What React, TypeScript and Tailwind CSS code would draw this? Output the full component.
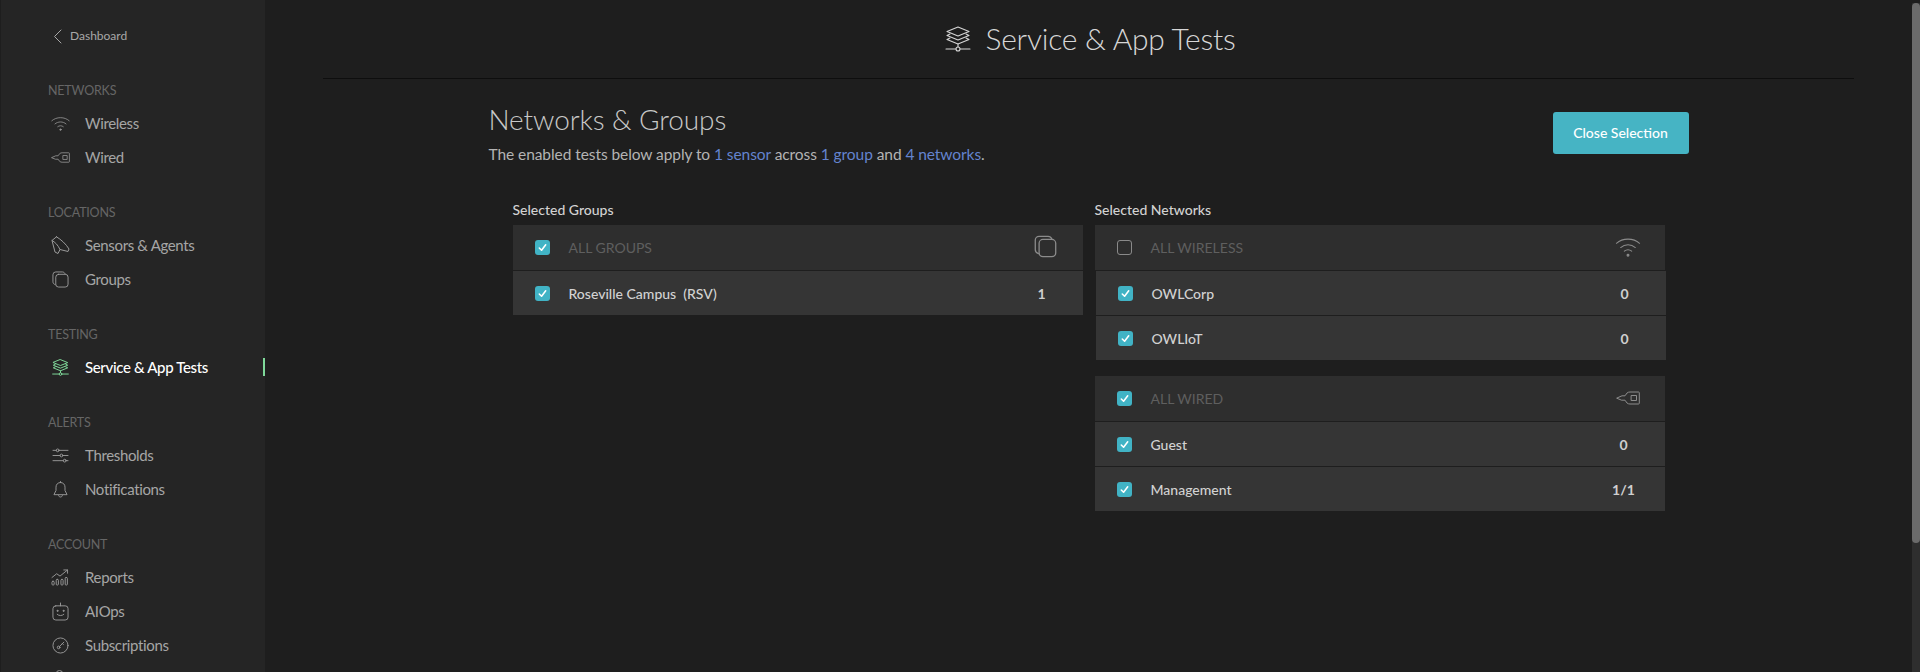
import React from "react";

type IconProps = { className?: string; sw?: number };

const Svg = ({ className, box, sw = 1, children }: IconProps & { box: string; children: React.ReactNode }) => (
  <svg viewBox={box} fill="none" stroke="currentColor" strokeWidth={sw} strokeLinecap="round" strokeLinejoin="round" className={className}>
    {children}
  </svg>
);

const WifiIcon = ({ className }: IconProps) => (
  <Svg box="0 0 24 19" className={className}>
    <path d="M1 6C7 .7 17 .7 23 6" />
    <path d="M5 10c4-3.400 10-3.400 14 0" />
    <path d="M8.500 13.500c2-1.600 5-1.600 7 0" />
    <circle cx="12" cy="17.300" r=".9" fill="currentColor" />
  </Svg>
);

const PlugIcon = ({ className }: IconProps) => (
  <Svg box="0 0 24 14" className={className}>
    <path d="M1 7l5-2.200h3L11 2c1-.8 2-1 3-1h8.500a.8.8 0 0 1 .8.800v10.400a.8.800 0 0 1-.8.800H14c-1 0-2-.2-3-1L9 9.200H6z" />
    <rect x="15.500" y="4.500" width="5" height="5" />
  </Svg>
);

const SensorIcon = ({ className }: IconProps) => (
  <Svg box="0 0 19 19" className={className}>
    <path d="M5.500.8L1 4.500 4 16l3 1.500 2-4 8 2 1-2.500C15 8 10 3.500 5.500.8z" />
    <path d="M1 4.500C4 6 7 9 9 13.500" />
  </Svg>
);

const GroupsIcon = ({ className }: IconProps) => (
  <Svg box="0 0 18 18" className={className}>
    <path d="M3.500 14.500C2 14 1 13 1 11.500V4a3 3 0 0 1 3-3h7c1.500 0 2.500 1 3 2.200" />
    <rect x="4" y="3.500" width="13" height="13.500" rx="3" />
  </Svg>
);

const StackIcon = ({ className, sw = 1 }: IconProps) => (
  <Svg box="0 0 26 26" className={className} sw={sw}>
    <path d="M13 1l11 4.500L13 10 2 5.500z" />
    <path d="M5 8L2 9.500 13 14l11-4.500L21 8" />
    <path d="M5 12l-3 1.500L13 18l11-4.500L21 12" />
    <path d="M13 18v3" />
    <circle cx="13" cy="23" r="2" />
    <path d="M1 23h10M15 23h10" />
  </Svg>
);

const SlidersIcon = ({ className }: IconProps) => (
  <Svg box="0 0 18 16" className={className}>
    <path d="M1 2.500h3.500M7.500 2.500H17M1 8h7.500M11.500 8H17M1 13.500h11M15 13.500h2" />
    <circle cx="6" cy="2.500" r="1.500" />
    <circle cx="10" cy="8" r="1.500" />
    <circle cx="13.500" cy="13.500" r="1.500" />
  </Svg>
);

const BellIcon = ({ className }: IconProps) => (
  <Svg box="0 0 16 18" className={className}>
    <path d="M8 1.500c-3 0-4.800 2.200-4.800 5v3.500L1 14.500h14L12.800 10V6.500c0-2.800-1.800-5-4.800-5z" />
    <path d="M6 15.500c.3 1 1 1.500 2 1.500s1.700-.5 2-1.500" />
    <path d="M8 .5v1" />
  </Svg>
);

const ReportsIcon = ({ className }: IconProps) => (
  <Svg box="0 0 19 18" className={className}>
    <path d="M1 9l5-4 3.500 2.500L17.500 1M13.500 1h4v3.500" />
    <rect x="1" y="13" width="2.300" height="4" rx="1" />
    <rect x="5.500" y="11" width="2.300" height="6" rx="1" />
    <rect x="10.500" y="11" width="2.300" height="6" rx="1" />
    <rect x="15" y="9" width="2.300" height="8" rx="1" />
  </Svg>
);

const BotIcon = ({ className }: IconProps) => (
  <Svg box="0 0 18 20" className={className}>
    <rect x="1" y="4" width="16" height="15" rx="3" />
    <path d="M9 1v3" />
    <circle cx="5.800" cy="9.300" r=".6" fill="currentColor" />
    <circle cx="12.200" cy="9.300" r=".6" fill="currentColor" />
    <path d="M5.500 13c1.800 1.800 5.200 1.800 7 0" />
  </Svg>
);

const KeyCircleIcon = ({ className }: IconProps) => (
  <Svg box="0 0 18 18" className={className}>
    <circle cx="9" cy="9" r="8" />
    <circle cx="7" cy="11" r="1.400" />
    <path d="M8 10l4.500-4.500M11 7l1 1" />
  </Svg>
);

const ChevronLeft = ({ className }: IconProps) => (
  <Svg box="0 0 9 15" className={className}>
    <path d="M8 1L1.500 7.500 8 14" />
  </Svg>
);

const UserIcon = ({ className }: IconProps) => (
  <Svg box="0 0 18 18" className={className}>
    <circle cx="9" cy="4" r="3.500" />
    <path d="M2 17c0-4 3-6 7-6s7 2 7 6" />
  </Svg>
);

const navGroups = [
  { title: "NETWORKS", items: [{ label: "Wireless", Icon: WifiIcon, size: "w-[19px] h-[15px]" }, { label: "Wired", Icon: PlugIcon, size: "w-[19px] h-[11px]" }] },
  { title: "LOCATIONS", items: [{ label: "Sensors & Agents", Icon: SensorIcon, size: "w-[19px] h-[19px]" }, { label: "Groups", Icon: GroupsIcon, size: "w-[17px] h-[17px]" }] },
  { title: "TESTING", items: [{ label: "Service & App Tests", Icon: StackIcon, size: "w-[17px] h-[17px]", active: true }] },
  { title: "ALERTS", items: [{ label: "Thresholds", Icon: SlidersIcon, size: "w-[17px] h-[15px]" }, { label: "Notifications", Icon: BellIcon, size: "w-[15px] h-[17px]" }] },
  { title: "ACCOUNT", items: [{ label: "Reports", Icon: ReportsIcon, size: "w-[18px] h-[17px]" }, { label: "AIOps", Icon: BotIcon, size: "w-[17px] h-[19px]" }, { label: "Subscriptions", Icon: KeyCircleIcon, size: "w-[17px] h-[17px]" }] },
];

const Sidebar = () => (
  <aside className="w-[265px] shrink-0 bg-[#252525] border-l border-[#1e1e1e] pt-[27px]">
    <div className="flex items-center h-[18px] pl-[52px] gap-[8px] text-[#a8a8a8]">
      <ChevronLeft className="w-[9px] h-[15px]" />
      <span className="text-[12px]">Dashboard</span>
    </div>
    <div className="mt-[37px]">
      {navGroups.map((group) => (
        <div key={group.title} className="mb-[30px]">
          <div className="h-[18px] pl-[47px] text-[12.500px] leading-[18px] tracking-[-0.2px] text-[#666666]">{group.title}</div>
          <div className="mt-[6px]">
            {group.items.map(({ label, Icon, size, active }: any) => (
              <div key={label} className="relative flex items-center h-[34px] pl-[49px]">
                <span className={`w-[20px] flex justify-center ${active ? "text-[#7fd99a]" : "text-[#9a9a9a]"}`}>
                  <Icon className={size} sw={active ? 1.5 : undefined} />
                </span>
                <span className={`ml-[15px] text-[15px] tracking-[-0.35px] ${active ? "text-white font-medium" : "text-[#a6a6a6]"}`}>{label}</span>
                {active && <span className="absolute right-0 top-[8px] w-[2px] h-[18px] bg-[#7fd99a]" />}
              </div>
            ))}
          </div>
        </div>
      ))}
      <div className="pl-[50px] -mt-[22px] text-[#9a9a9a]">
        <UserIcon className="w-[17px] h-[17px]" />
      </div>
    </div>
  </aside>
);

const Check = ({ on = true }: { on?: boolean }) =>
  on ? (
    <span className="w-[15px] h-[15px] rounded-[3px] bg-[#41b3c5] flex items-center justify-center shrink-0">
      <svg viewBox="0 0 12 12" className="w-[11px] h-[11px]" fill="none" stroke="white" strokeWidth="1.700" strokeLinecap="round" strokeLinejoin="round">
        <path d="M2.500 6.500l2.500 2.500 4.500-6" />
      </svg>
    </span>
  ) : (
    <span className="w-[15px] h-[15px] rounded-[3px] border border-[#8a8a8a] shrink-0" />
  );

const HeadRow = ({ label, on, children }: { label: string; on: boolean; children: React.ReactNode }) => (
  <div className="flex items-center h-[45px] bg-[#2e2e2e] pl-[22px] pr-[24px]">
    <Check on={on} />
    <span className="ml-[19px] text-[14px] text-[#5f5f5f]">{label}</span>
    <span className="ml-auto w-[26px] flex justify-center text-[#8c8c8c] -mt-[2px]">{children}</span>
  </div>
);

const Row = ({ label, count, shift }: { label: string; count: string; shift?: boolean }) => (
  <div className={`flex items-center h-[44px] mt-[1px] bg-[#353535] pl-[22px] pr-[28px] ${shift ? "ml-[1px] -mr-[1px]" : ""}`}>
    <Check />
    <span className="ml-[19px] text-[14px] font-medium text-[#d2d2d2]">{label}</span>
    <span className="ml-auto w-[26px] flex justify-center text-[14px] font-bold text-[#cfcfcf] whitespace-nowrap">{count}</span>
  </div>
);

export default function App() {
  return (
    <div className="flex h-[672px] w-[1920px] overflow-hidden bg-[#1e1e1e] [font-family:Lato,sans-serif]">
      <Sidebar />
      <main className="flex-1 min-w-0">
        <div className="mx-[58px] h-[79px] border-b border-[#0e0e0e] flex items-center justify-center gap-[15px] text-[#d6d6d6] pb-[1px] pl-[3px]">
          <StackIcon className="w-[26px] h-[26px]" sw={1.1} />
          <h1 className="text-[30px] font-light tracking-[-0.25px]">Service &amp; App Tests</h1>
        </div>
        <div className="w-[1200px] mx-auto">
          <div className="flex justify-between pt-[21px]">
            <div>
              <h2 className="text-[28px] leading-[38px] font-light tracking-[-0.1px] text-[#c8c8c8]">Networks &amp; Groups</h2>
              <p className="mt-[5px] text-[15.500px] leading-[22px] tracking-[-0.07px] text-[#b4b4b4]">
                The enabled tests below apply to <span className="text-[#6484cf]">1 sensor</span> across{" "}
                <span className="text-[#6484cf]">1 group</span> and <span className="text-[#6484cf]">4 networks</span>.
              </p>
            </div>
            <button className="mt-[12px] h-[42px] w-[136px] rounded-[3px] bg-[#46b4c4] pb-[2px] text-[14px] font-medium text-white">Close Selection</button>
          </div>
          <div className="grid grid-cols-2 gap-x-[12px] px-[24px] mt-[34px]">
            <div>
              <h3 className="h-[26px] text-[14px] font-medium text-[#d2d2d2]">Selected Groups</h3>
              <HeadRow label="ALL GROUPS" on>
                <GroupsIcon className="w-[23px] h-[23px]" />
              </HeadRow>
              <Row label={"Roseville Campus\u00a0 (RSV)"} count="1" />
            </div>
            <div>
              <h3 className="h-[26px] text-[14px] font-medium text-[#d2d2d2]">Selected Networks</h3>
              <HeadRow label="ALL WIRELESS" on={false}>
                <WifiIcon className="w-[26px] h-[20px]" />
              </HeadRow>
              <Row label="OWLCorp" count="0" shift />
              <Row label="OWLIoT" count="0" shift />
              <div className="h-[16px]" />
              <HeadRow label="ALL WIRED" on>
                <PlugIcon className="w-[24px] h-[14px]" />
              </HeadRow>
              <Row label="Guest" count="0" />
              <Row label="Management" count="1/1" />
            </div>
          </div>
        </div>
      </main>
      <div className="w-[8px] shrink-0 bg-[#2e2e2e]">
        <div className="h-[3px] bg-[#1e1e1e]" />
        <div className="h-[540px] rounded-[4px] bg-[#6b6b6b]" />
      </div>
    </div>
  );
}
